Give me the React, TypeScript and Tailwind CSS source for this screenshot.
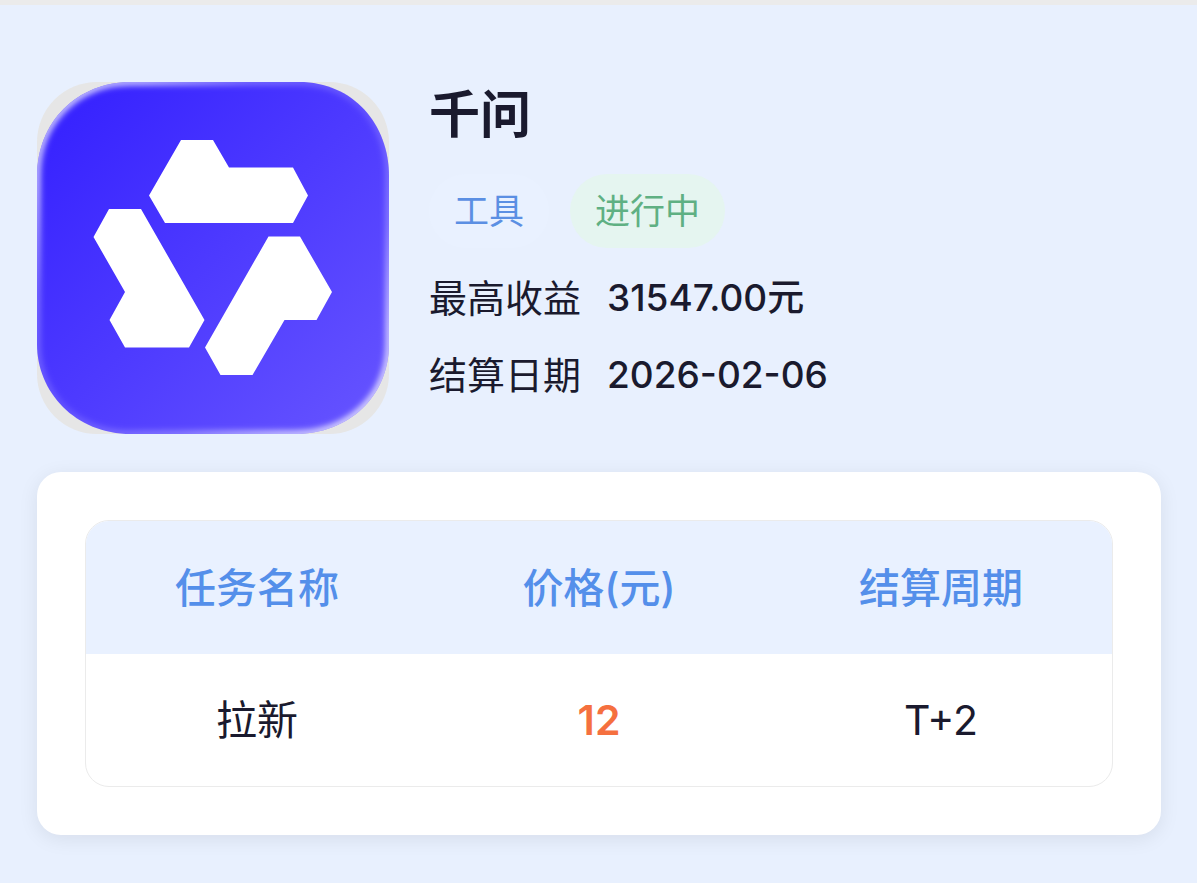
import { clsx } from "clsx";

const details = [
  { label: "最高收益", value: "31547.00元" },
  { label: "结算日期", value: "2026-02-06" },
];

const columns = ["任务名称", "价格(元)", "结算周期"];

const tasks = [{ name: "拉新", price: "12", cycle: "T+2" }];

function AppLogo() {
  return (
    <svg
      viewBox="0 0 352 352"
      className="size-[352px] shrink-0 rounded-[60px] bg-[#e6e6e6]"
      role="img"
      aria-label="千问"
    >
      <defs>
        <linearGradient id="logo-fill" x1="0" y1="0" x2="1" y2="1">
          <stop offset="0.1" stopColor="#3824ff" />
          <stop offset="0.9" stopColor="#6250ff" />
        </linearGradient>
        <linearGradient id="logo-rim" x1="0" y1="0" x2="1" y2="1">
          <stop offset="0" stopColor="#fff" stopOpacity="1" />
          <stop offset="0.15" stopColor="#fff" stopOpacity="0.8" />
          <stop offset="0.3" stopColor="#fff" stopOpacity="0.35" />
          <stop offset="0.5" stopColor="#fff" stopOpacity="0.15" />
          <stop offset="0.7" stopColor="#fff" stopOpacity="0.35" />
          <stop offset="0.85" stopColor="#fff" stopOpacity="0.8" />
          <stop offset="1" stopColor="#fff" stopOpacity="1" />
        </linearGradient>
        <filter id="logo-soft" x="-10%" y="-10%" width="120%" height="120%">
          <feGaussianBlur stdDeviation="3" />
        </filter>
        <clipPath id="logo-clip">
          <path d="M94 0H262C316 0 352 42 352 94V262C352 314 312 352 258 352H94C38 352 0 310 0 262V94C0 40 40 0 94 0Z" />
        </clipPath>
      </defs>
      <g clipPath="url(#logo-clip)">
        <rect width="352" height="352" fill="url(#logo-fill)" />
        <path
          d="M94 0H262C316 0 352 42 352 94V262C352 314 312 352 258 352H94C38 352 0 310 0 262V94C0 40 40 0 94 0Z"
          fill="none"
          stroke="url(#logo-rim)"
          strokeWidth="6"
          filter="url(#logo-soft)"
        />
      </g>
      <g fill="#fff">
        <path d="M144 58H176L192 85.5H256L271 113.5L256 141H128L112 113.5Z" />
        <path d="M72 127H104L167.5 238L152 265.5H88L72.5 238L88 210L56.5 155Z" />
        <path d="M231.5 154.5H263L295 210L279.5 238H247.5L215.5 293H183.5L168 265.5Z" />
      </g>
    </svg>
  );
}

function Tag({ text, className }: { text: string; className: string }) {
  return (
    <span
      className={clsx(
        "rounded-full px-[25px] py-[11px] text-[35px] leading-[52px]",
        className,
      )}
    >
      {text}
    </span>
  );
}

export default function App() {
  return (
    <div className="min-h-screen border-t-[5px] border-[#ebebeb] bg-[#e8f0fe] pt-[77px] pr-9 pb-12 pl-[37px] font-['Inter','Noto_Sans_CJK_SC',sans-serif] text-[#1a1a2e]">
      <header className="flex gap-10">
        <AppLogo />
        <div className="flex flex-col">
          <h1 className="text-[51px] leading-[66px] font-bold">千问</h1>
          <div className="mt-[26px] flex gap-[21px]">
            <Tag text="工具" className="bg-[#e9f1ff] text-[#5b8fe3]" />
            <Tag text="进行中" className="bg-[#e5f5f0] text-[#5fb083]" />
          </div>
          <dl className="mt-6 flex flex-col gap-[25px] leading-[52px]">
            {details.map((item) => (
              <div key={item.label} className="flex gap-[26px]">
                <dt className="text-[38px]">{item.label}</dt>
                <dd className="text-[37px] font-medium">{item.value}</dd>
              </div>
            ))}
          </dl>
        </div>
      </header>

      <main className="mt-[38px] rounded-3xl bg-white p-12 shadow-[0_4px_20px_rgba(0,0,0,0.08)]">
        <div className="overflow-hidden rounded-3xl border border-[#ebebeb]">
          <table className="w-full table-fixed text-center text-[41px] leading-[60px]">
            <thead className="bg-[#e9f1ff] text-[#548fea]">
              <tr>
                {columns.map((column) => (
                  <th key={column} className="pt-[37px] pb-9 font-medium">
                    {column}
                  </th>
                ))}
              </tr>
            </thead>
            <tbody>
              {tasks.map((task) => (
                <tr key={task.name}>
                  <td className="py-9">{task.name}</td>
                  <td className="py-9 font-semibold text-[#f5703f]">
                    {task.price}
                  </td>
                  <td className="py-9">{task.cycle}</td>
                </tr>
              ))}
            </tbody>
          </table>
        </div>
      </main>
    </div>
  );
}
